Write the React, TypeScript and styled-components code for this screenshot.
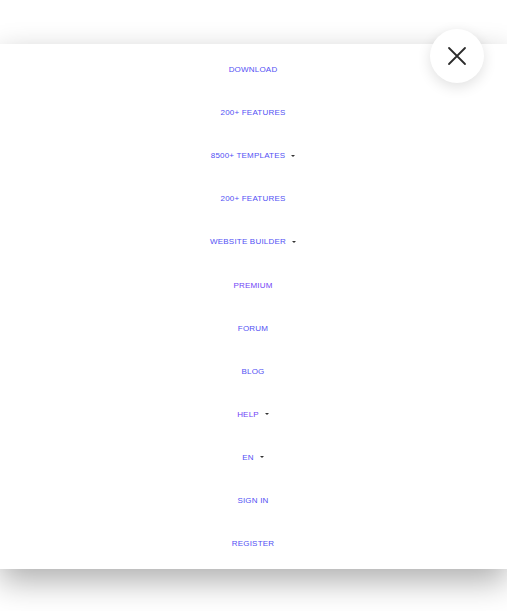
import { styled, createGlobalStyle } from 'styled-components';

const GlobalStyle = createGlobalStyle`
  html, body {
    margin: 0;
    padding: 0;
    background: #fff;
    font-family: 'Liberation Sans', Arial, sans-serif;
  }
`;

type NavItem = { label: string; caret?: boolean; purple?: boolean };

const items: NavItem[] = [
  { label: 'DOWNLOAD' },
  { label: '200+ FEATURES' },
  { label: '8500+ TEMPLATES', caret: true },
  { label: '200+ FEATURES' },
  { label: 'WEBSITE BUILDER', caret: true },
  { label: 'PREMIUM', purple: true },
  { label: 'FORUM' },
  { label: 'BLOG' },
  { label: 'HELP', caret: true, purple: true },
  { label: 'EN', caret: true },
  { label: 'SIGN IN' },
  { label: 'REGISTER' },
];

const App = () => {
  return (
    <>
      <GlobalStyle />
      <Page>
        <MenuPanel>
          {items.map((item, i) => (
            <MenuRow key={i}>
              <MenuLink $purple={item.purple}>
                {item.label}
                {item.caret && <Caret />}
              </MenuLink>
            </MenuRow>
          ))}
        </MenuPanel>
        <CloseButton aria-label="Close">
          <svg width="20" height="20" viewBox="0 0 20 20">
            <path d="M2 2 L18 18 M18 2 L2 18" stroke="#2b2b2b" strokeWidth="1.8" strokeLinecap="round" fill="none" />
          </svg>
        </CloseButton>
      </Page>
    </>
  );
};

const Page = styled.div`
  position: relative;
  width: 507px;
  height: 611px;
  padding-top: 44px;
  box-sizing: border-box;
  background: #fff;
  overflow: hidden;
`;

const MenuPanel = styled.nav`
  display: flex;
  flex-direction: column;
  padding: 4px 0 4px;
  background: #fff;
  box-shadow: 0 12px 30px rgba(0, 0, 0, 0.32);
`;

const MenuRow = styled.div`
  display: flex;
  justify-content: center;
  align-items: center;
  height: 43.1px;
  padding-right: 1px;
`;

const MenuLink = styled.a<{ $purple?: boolean }>`
  display: flex;
  align-items: center;
  color: ${(p) => (p.$purple ? '#7044f6' : '#5250f4')};
  font-size: 8px;
  letter-spacing: 0.2px;
  cursor: pointer;
`;

const Caret = styled.span`
  width: 0;
  height: 0;
  margin-left: 6px;
  border-left: 2px solid transparent;
  border-right: 2px solid transparent;
  border-top: 2px solid #333;
`;

const CloseButton = styled.button`
  position: absolute;
  top: 29px;
  left: 430px;
  display: flex;
  justify-content: center;
  align-items: center;
  width: 54px;
  height: 54px;
  padding: 0;
  border: none;
  border-radius: 50%;
  background: #fff;
  box-shadow: 0 4px 14px rgba(0, 0, 0, 0.12);
  cursor: pointer;
`;

export default App;
